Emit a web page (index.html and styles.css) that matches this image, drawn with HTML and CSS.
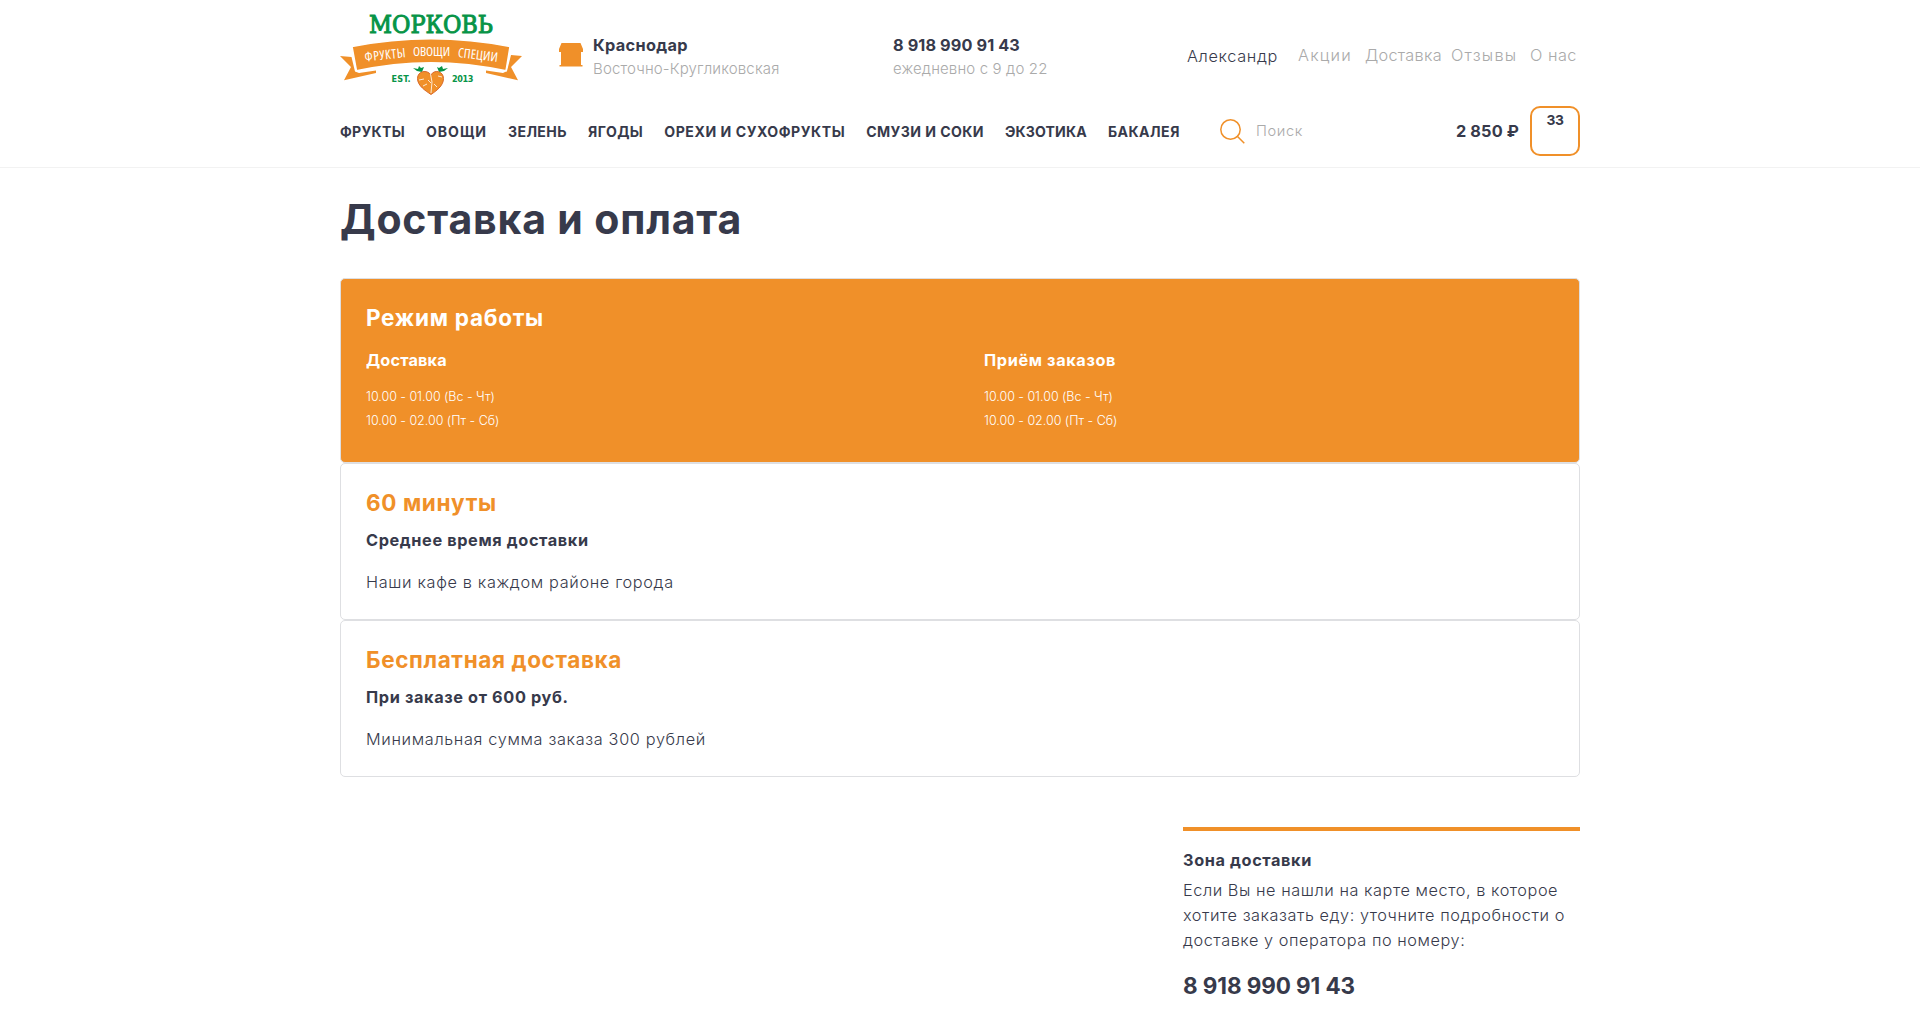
FILE: index.html
```html
<!DOCTYPE html>
<html lang="ru">
<head>
<meta charset="utf-8">
<title>Доставка и оплата</title>
<link rel="stylesheet" href="styles.css">
</head>
<body>
<header class="header">
  <div class="container top">
    <a class="logo"><svg width="184" height="100" viewBox="0 0 184 100">
      <text class="logo-name" x="29" y="33" textLength="124" lengthAdjust="spacingAndGlyphs">МОРКОВЬ</text>
      <g fill="#f09029">
        <path d="M0 56 11.500 57 15 71.500 19 73 36 70.500V73L4 80.300 11 67Z"/>
        <path d="M182 56 171 55 167 71 163 73 146 70.500V73L178 80.300 171 67Z"/>
        <path stroke="#fff" stroke-width="1.500" d="M12 46.500Q91 31 170 46.500L166 70.800Q91 54.500 16.500 70.800Z"/>
      </g>
      <g class="logo-ribbon">
        <text x="25" y="61.500" textLength="41" transform="rotate(-6 25 61.500)">ФРУКТЫ</text>
        <text x="73" y="56" textLength="37">ОВОЩИ</text>
        <text x="117.500" y="57" textLength="40" transform="rotate(7 117.500 57)">СПЕЦИИ</text>
      </g>
      <g class="logo-year">
        <text x="51.500" y="82" textLength="19">EST.</text>
        <text x="112" y="82" textLength="21.500">2013</text>
      </g>
      <path fill="#079447" d="M73 68 78 69 79 66 81 68 84 67 82 72 77 71ZM108 68 103 69 102 66 99 68 97 67 99 72 104 71Z"/>
      <path fill="#f09029" stroke="#d9692a" d="M91 94.500C86 91 77.500 86 77.500 78.500C77.500 71 87 69 91 75C94 69 103.500 71 103.500 78.500C103.500 86 96 91 91 94.500Z"/>
      <path fill="none" stroke="#fff" stroke-width=".8" d="M90.500 74 92 82 91 93M79 80l5-1M83 86l4-2M91 83l-3-3M102 77l-4-1M97 87l-3-3"/>
    </svg></a>
    <div class="city">
      <svg width="24" height="24" viewBox="0 0 24 24"><path fill="#f09029" d="M2.500 0H21.500L24 6V9H22V22H23.500V23.500H.5V22H2V9H0V6Z"/></svg>
      <div class="pair"><b class="city-name">Краснодар</b><span>Восточно-Кругликовская</span></div>
    </div>
    <div class="pair phone"><b>8 918 990 91 43</b><span>ежедневно с 9 до 22</span></div>
    <nav class="links"><a class="user">Александр</a><a class="link-sales">Акции</a><a class="link-delivery">Доставка</a><a class="link-reviews">Отзывы</a><a class="link-about">О нас</a></nav>
  </div>
  <div class="container bottom">
    <nav class="menu"><a class="fruits">ФРУКТЫ</a><a class="vegetables">ОВОЩИ</a><a>ЗЕЛЕНЬ</a><a>ЯГОДЫ</a><a class="nuts">ОРЕХИ И СУХОФРУКТЫ</a><a>СМУЗИ И СОКИ</a><a class="exotic">ЭКЗОТИКА</a><a class="grocery">БАКАЛЕЯ</a></nav>
    <div class="search"><svg width="25" height="25" viewBox="0 0 25 25" fill="none" stroke="#f09029" stroke-width="1.500"><circle cx="10.500" cy="10.500" r="9.700"/><path d="M17 17l7.300 7.300"/></svg><span>Поиск</span></div>
    <div class="cart"><b>2 850 ₽</b><span class="badge">33</span></div>
  </div>
</header>
<main class="container">
  <h1>Доставка и оплата</h1>
  <section class="card card-hours">
    <h2>Режим работы</h2>
    <div class="hours">
      <div><h3 class="tight">Доставка</h3><p>10.00 - 01.00 (Вс - Чт)<br>10.00 - 02.00 (Пт - Сб)</p></div>
      <div><h3>Приём заказов</h3><p>10.00 - 01.00 (Вс - Чт)<br>10.00 - 02.00 (Пт - Сб)</p></div>
    </div>
  </section>
  <section class="card"><h2>60 минуты</h2><h3>Среднее время доставки</h3><p>Наши кафе в каждом районе города</p></section>
  <section class="card"><h2>Бесплатная доставка</h2><h3>При заказе от 600 руб.</h3><p>Минимальная сумма заказа 300 рублей</p></section>
  <aside class="zone">
    <h3>Зона доставки</h3>
    <p>Если Вы не нашли на карте место, в которое<br>хотите заказать еду: уточните подробности о<br>доставке у оператора по номеру:</p>
    <b>8 918 990 91 43</b>
  </aside>
</main>
</body>
</html>
```
FILE: styles.css
```css
* { box-sizing: border-box; }
body { margin: 0; height: 1024px; overflow: hidden; background: #fff; color: #373a4b; font: 300 16.3px/25px Inter, "Open Sans", sans-serif; }
h1, h2, h3, p { margin: 0; font-weight: 300; white-space: nowrap; }
b, h3 { font-weight: 700; font-size: 16.3px; }
.container { width: 1240px; margin: 0 auto; }

.header { height: 168px; border-bottom: 1px solid #f2f2f2; }
.top { display: flex; height: 106px; }
.logo { width: 219px; }
.logo-name { font: 24px "DejaVu Serif", serif; fill: #079447; stroke: #079447; stroke-width: 1px; }
.logo-ribbon { font: 13px "Open Sans", sans-serif; font-stretch: 75%; fill: #fff; }
.logo-year { font: 700 9.5px "DejaVu Sans Condensed", sans-serif; font-size: 9px; fill: #079447; }
.city { display: flex; gap: 10px; width: 334px; padding-top: 34px; }
.city svg { margin-top: 9px; }
.pair { display: flex; flex-direction: column; align-items: flex-start; line-height: 23px; letter-spacing: .1px; white-space: nowrap; }
.pair span { color: #aaa; font-size: 15px; letter-spacing: .14px; }
.pair .city-name { letter-spacing: .34px; }
.phone { width: 294px; padding-top: 34px; }
.links { display: flex; padding-top: 43px; color: #aaa; white-space: nowrap; }
.user { width: 111px; color: #373a4b; padding-top: 1px; letter-spacing: .65px; }
.link-sales { width: 67px; letter-spacing: 1.2px; }
.link-delivery { width: 86px; letter-spacing: .27px; }
.link-reviews { width: 79px; letter-spacing: 1.2px; }
.link-about { letter-spacing: .49px; }

.bottom { display: flex; height: 50px; align-items: center; }
.menu { display: flex; gap: 21px; width: 880px; padding-top: 1px; font-size: 14.1px; font-weight: 700; letter-spacing: .42px; white-space: nowrap; }
.fruits { letter-spacing: .29px; }
.vegetables { letter-spacing: .97px; }
.nuts { letter-spacing: .55px; }
.exotic { letter-spacing: .13px; }
.grocery { letter-spacing: .47px; }
.search { display: flex; gap: 11px; width: 236px; align-items: center; font-size: 14.7px; letter-spacing: .59px; color: #aaa; }
.cart { display: flex; gap: 10px; align-items: center; white-space: nowrap; }
.cart b { width: 64px; padding-top: 1px; letter-spacing: .13px; }
.badge { width: 50px; height: 50px; border: 2px solid #f09029; border-radius: 10px; text-align: center; font-size: 13.8px; font-weight: 700; line-height: 25px; letter-spacing: -.3px; }

h1 { padding-top: 24px; height: 110px; font-size: 41px; font-weight: 700; line-height: 54px; letter-spacing: .81px; }
.card { height: 157px; padding: 24px 25px; border: 1px solid #dedfe2; border-radius: 5px; }
.card h2 { color: #f09029; font-size: 22.5px; font-weight: 700; line-height: 30px; letter-spacing: .62px; }
.card h3, .zone h3 { line-height: 24px; letter-spacing: .62px; }
.card h3 { margin-top: 10px; }
.card p { margin-top: 18px; line-height: 24px; letter-spacing: .65px; }
.card-hours { height: 185px; background: #f09029; color: #fff; }
.card-hours h2 { color: #fff; letter-spacing: .73px; }
.hours { display: grid; grid-template-columns: 618px 1fr; }
.card-hours h3 { margin-top: 15px; }
.card-hours .tight { letter-spacing: .16px; }
.card-hours p { font-size: 12.5px; margin-top: 13px; letter-spacing: -.03px; }

.zone { width: 397px; margin: 50px 0 0 auto; border-top: 4px solid #f09029; padding-top: 17px; }
.zone p { margin-top: 6px; letter-spacing: .55px; }
.zone b { display: block; margin-top: 20px; font-size: 22.5px; line-height: 26px; letter-spacing: -.09px; }
```
